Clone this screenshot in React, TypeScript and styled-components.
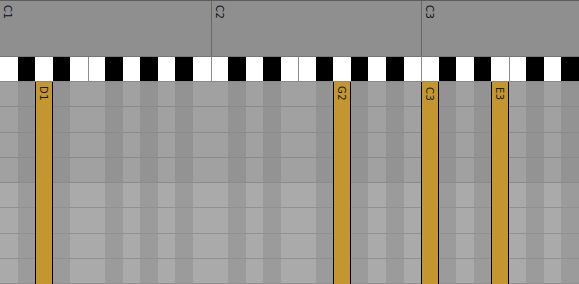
import React from 'react';
import styled, { createGlobalStyle } from 'styled-components';

const GlobalStyle = createGlobalStyle`
  html, body {
    margin: 0;
    padding: 0;
    background: #8f8f8f;
    overflow: hidden;
  }
`;

const KEY_COUNT = 33;
const BLACK = [1, 3, 6, 8, 10];
const NAMES = ['C', 'C#', 'D', 'D#', 'E', 'F', 'F#', 'G', 'G#', 'A', 'A#', 'B'];

const isBlack = (i: number) => BLACK.includes(i % 12);
const noteName = (i: number) => `${NAMES[i % 12]}${Math.floor(i / 12) + 1}`;
// a white key right after another white key gets a thin divider (E|F, B|C)
const hasDivider = (i: number) => i > 0 && !isBlack(i) && !isBlack(i - 1);

const NOTES = [2, 19, 24, 28];

const Roll = styled.div`
  width: 579px;
  height: 284px;
  display: flex;
  flex-direction: column;
  overflow: hidden;
  font-family: 'DejaVu Sans', 'Liberation Sans', sans-serif;
`;

const Header = styled.div`
  height: 55px;
  display: grid;
  grid-template-columns: 12fr 12fr 9fr;
  background: #8f8f8f;
  border-top: 1px solid #5c5c5c;
  border-bottom: 1px solid #767676;
`;

const Octave = styled.div<{ $first?: boolean }>`
  border-left: ${p => (p.$first ? 'none' : '1px solid #676767')};
  padding: 3px 0 0 2px;
`;

const Label = styled.span`
  writing-mode: vertical-rl;
  font-size: 10px;
  line-height: 10px;
  color: #0d1020;
  letter-spacing: 0.5px;
`;

const Keys = styled.div`
  height: 24px;
  display: grid;
  grid-template-columns: repeat(${KEY_COUNT}, 1fr);
  border-bottom: 1px solid #8a8a8a;
`;

const Key = styled.div<{ $black: boolean; $divider: boolean }>`
  background: ${p => (p.$black ? '#000' : '#fff')};
  box-shadow: ${p => (p.$divider ? 'inset 1px 0 0 #8c8c8c' : 'none')};
`;

const Grid = styled.div`
  flex: 1;
  display: grid;
  grid-template-columns: repeat(${KEY_COUNT}, 1fr);
`;

const Column = styled.div<{ $divider: boolean }>`
  display: flex;
  flex-direction: column;
  box-shadow: ${p => (p.$divider ? 'inset 1px 0 0 rgba(0,0,0,0.03)' : 'none')};
`;

const Cell = styled.div<{ $black: boolean; $light: boolean }>`
  flex: 1;
  background: ${p =>
    p.$light ? (p.$black ? '#9b9b9b' : '#aaaaaa') : p.$black ? '#939393' : '#a1a1a1'};
  border-bottom: 1px solid ${p => (p.$light ? '#919191' : '#8b8b8b')};
`;

const Note = styled.div`
  background: #c4962f;
  border-left: 1px solid #000;
  border-right: 1px solid #000;
  padding: 4px 0 0 2px;
`;

const NoteLabel = styled(Label)`
  color: #141a10;
`;

export default function App() {
  const keys = Array.from({ length: KEY_COUNT }, (_, i) => i);
  const rows = Array.from({ length: 8 }, (_, r) => r);

  return (
    <>
      <GlobalStyle />
      <Roll>
        <Header>
          <Octave $first><Label>C1</Label></Octave>
          <Octave><Label>C2</Label></Octave>
          <Octave><Label>C3</Label></Octave>
        </Header>
        <Keys>
          {keys.map(i => (
            <Key key={i} $black={isBlack(i)} $divider={hasDivider(i)} />
          ))}
        </Keys>
        <Grid>
          {keys.map(i =>
            NOTES.includes(i) ? (
              <Note key={i}>
                <NoteLabel>{noteName(i)}</NoteLabel>
              </Note>
            ) : (
              <Column key={i} $divider={hasDivider(i)}>
                {rows.map(r => (
                  <Cell key={r} $black={isBlack(i)} $light={r >= 4} />
                ))}
              </Column>
            )
          )}
        </Grid>
      </Roll>
    </>
  );
}
